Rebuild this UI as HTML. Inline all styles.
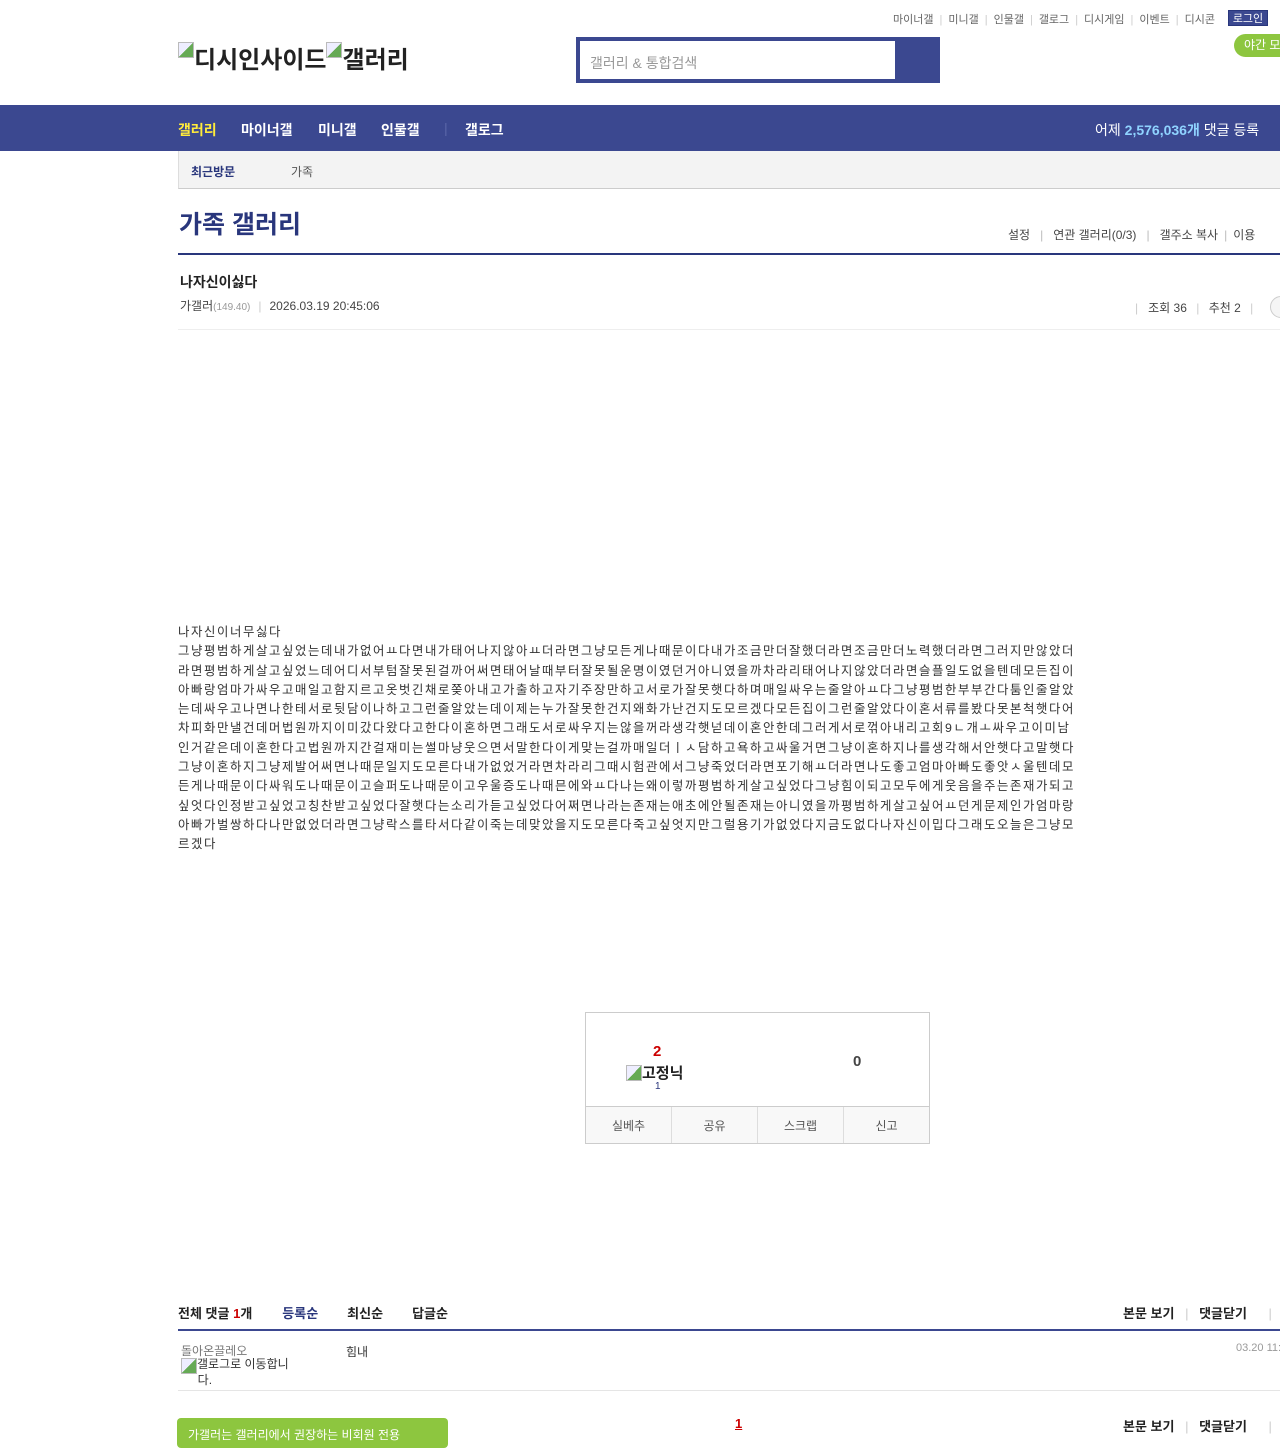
<!DOCTYPE html>
<html><head><meta charset="utf-8">
<style>
*{margin:0;padding:0;box-sizing:border-box}
body{width:1280px;height:1436px;overflow:hidden;background:#fff;font-family:"Liberation Sans","Noto Sans CJK KR",sans-serif;color:#333;position:relative}
.a{position:absolute;white-space:nowrap}
.ic{display:inline-block;width:16px;height:16px;border:1px solid #bbb;background:linear-gradient(135deg,#eef 50%,#6a5 50%);vertical-align:top;margin-top:2px}
.top{top:11px;left:893px;font-size:11px;color:#666}
.top i{color:#ccc;font-style:normal;margin:0 6px}
.login{top:10px;left:1228px;width:40px;height:16px;background:#3b4890;color:#fff;font-size:11px;text-align:center;line-height:16px;border:1px solid #29367c}
.night{top:34px;left:1234px;width:60px;height:23px;background:#8dc63f;border-radius:12px;color:#fff;font-size:12px;line-height:23px;padding-left:10px}
.logo{top:40px;left:178px;font-size:24px;font-weight:bold;color:#222}
.search{top:37px;left:576px;width:364px;height:46px;background:#3b4890}
.search div{position:absolute;left:4px;top:4px;width:315px;height:38px;background:#fff;font-size:14px;color:#999;padding:12px 10px}
.nav{top:105px;left:0;width:1280px;height:46px;background:#3b4890}
.nav span{position:absolute;top:15px;font-size:14px;font-weight:bold;color:#fff}
.sub{top:151px;left:178px;width:1110px;height:38px;background:#f3f3f3;border-bottom:1px solid #ccc;border-left:1px solid #ddd}
.title{top:205px;left:179px;font-size:25px;font-weight:bold;color:#29367c}
.menu{top:226px;left:1008px;font-size:12px;color:#444}
.menu i{color:#bbb;font-style:normal;margin:0 10px}
.line1{top:253px;left:178px;width:1102px;height:2px;background:#29367c}
.body{top:623px;left:178px;width:1100px;font-size:12.4px;letter-spacing:1.6px;line-height:19.3px;color:#333;white-space:nowrap}
.rec{top:1012px;left:585px;width:345px;height:132px;border:1px solid #ccc}
.btns{position:absolute;left:0;bottom:0;width:343px;height:37px;border-top:1px solid #ccc;background:#f8f8f8;display:flex}
.btns div{flex:1;border-right:1px solid #ddd;font-size:12px;color:#555;text-align:center;line-height:38px}
.btns div:last-child{border:none}
.cm{top:1303px;left:178px;font-size:13px;font-weight:bold;color:#222}
.line2{top:1329px;left:178px;width:1102px;height:2px;background:#3b4890}
</style></head><body>
<div class="a top">마이너갤<i>|</i>미니갤<i>|</i>인물갤<i>|</i>갤로그<i>|</i>디시게임<i>|</i>이벤트<i>|</i>디시콘</div>
<div class="a login">로그인</div>
<div class="a night">야간 모드</div>
<div class="a logo"><span class="ic"></span>디시인사이드<span class="ic"></span>갤러리</div>
<div class="a search"><div>갤러리 &amp; 통합검색</div></div>
<div class="a nav">
<span style="left:178px;color:#ffeb3b">갤러리</span><span style="left:241px">마이너갤</span><span style="left:318px">미니갤</span><span style="left:381px">인물갤</span><span style="left:444px;top:15px;color:#5a66a8;font-weight:normal">|</span><span style="left:465px">갤로그</span>
<span style="left:1095px;font-weight:normal">어제 <b style="color:#8fd3ff">2,576,036개</b> 댓글 등록</span>
</div>
<div class="a sub"><span class="a" style="left:12px;top:12px;font-size:12px;font-weight:bold;color:#29367c">최근방문</span><span class="a" style="left:112px;top:12px;font-size:12px;color:#555">가족</span></div>
<div class="a title">가족 갤러리</div>
<div class="a menu">설정<i>|</i>연관 갤러리(0/3)<i>|</i>갤주소 복사<i style="margin:0 6px">|</i>이용</div>
<div class="a line1"></div>
<div class="a" style="top:272px;left:180px;font-size:14px;font-weight:bold;color:#222">나자신이싫다</div>
<div class="a" style="top:297px;left:180px;font-size:12px;color:#444">가갤러<span style="font-size:10px;color:#999">(149.40)</span><span style="color:#ccc;margin:0 8px">|</span>2026.03.19 20:45:06</div>
<div class="a" style="top:299px;left:1135px;font-size:12px;color:#444"><span style="color:#ccc">|</span>&nbsp;&nbsp; 조회 36 <span style="color:#ccc;margin:0 6px">|</span> 추천 2 <span style="color:#ccc;margin:0 6px">|</span></div>
<div class="a" style="top:296px;left:1270px;width:22px;height:22px;border:1px solid #ccc;border-radius:11px;background:#f5f5f5"></div>
<div class="a" style="top:329px;left:178px;width:1102px;height:1px;background:#eee"></div>
<div class="a body">나자신이너무싫다<br>그냥평범하게살고싶었는데내가없어ㅛ다면내가태어나지않아ㅛ더라면그냥모든게나때문이다내가조금만더잘했더라면조금만더노력했더라면그러지만않았더<br>라면평범하게살고싶었느데어디서부텀잘못된걸까어써면태어날때부터잘못될운명이였던거아니였을까차라리태어나지않았더라면슬플일도없을텐데모든집이<br>아빠랑엄마가싸우고매일고함지르고옷벗긴채로쫒아내고가출하고자기주장만하고서로가잘못햇다하며매일싸우는줄알아ㅛ다그냥평범한부부간다툼인줄알았<br>는데싸우고나면나한테서로뒷담이나하고그런줄알았는데이제는누가잘못한건지왜화가난건지도모르겠다모든집이그런줄알았다이혼서류를봤다못본척햇다어<br>차피화만낼건데머법원까지이미갔다왔다고한다이혼하면그래도서로싸우지는않을꺼라생각햇넏데이혼안한데그러게서로꺾아내리고회9ㄴ개ㅗ싸우고이미남<br>인거같은데이혼한다고법원까지간걸재미는썰마냥웃으면서말한다이게맞는걸까매일더ㅣㅅ담하고욕하고싸울거면그냥이혼하지나를생각해서안햇다고말햇다<br>그냥이혼하지그냥제발어써면나때문일지도모른다내가없었거라면차라리그때시험관에서그냥죽었더라면포기해ㅛ더라면나도좋고엄마아빠도좋앗ㅅ울텐데모<br>든게나때문이다싸워도나때문이고슬퍼도나때문이고우울증도나때믄에와ㅛ다나는왜이렇까평범하게살고싶었다그냥힘이되고모두에게웃음을주는존재가되고<br>싶엇다인정받고싶었고칭찬받고싶었다잘햇다는소리가듣고싶었다어쩌면나라는존재는애초에안될존재는아니였을까평범하게살고싶어ㅛ던게문제인가엄마랑<br>아빠가벌쌍하다나만없었더라면그냥락스를타서다같이죽는데맞았을지도모른다죽고싶엇지만그럴용기가없었다지금도없다나자신이밉다그래도오늘은그냥모<br>르겠다</div>
<div class="a rec">
<div class="a" style="left:67px;top:30px;font-size:15px;font-weight:bold;color:#c00">2</div>
<div class="a" style="left:40px;top:49px;font-size:15px;font-weight:bold;color:#222"><span class="ic" style="margin-top:3px"></span>고정닉</div>
<div class="a" style="left:69px;top:68px;font-size:10px;color:#29367c">1</div>
<div class="a" style="left:267px;top:40px;font-size:15px;font-weight:bold;color:#444">0</div>
<div class="btns"><div>실베추</div><div>공유</div><div>스크랩</div><div>신고</div></div>
</div>
<div class="a cm">전체 댓글 <span style="color:#c00">1</span>개<span style="margin-left:30px;color:#29367c">등록순</span><span style="margin-left:29px">최신순</span><span style="margin-left:29px">답글순</span></div>
<div class="a" style="top:1303px;left:1123px;font-size:13px;font-weight:bold;color:#222">본문 보기 <span style="color:#ccc;font-weight:normal;margin:0 7px">|</span> 댓글닫기 <span style="color:#ccc;font-weight:normal;margin-left:18px">|</span></div>
<div class="a line2"></div>
<div class="a" style="top:1342px;left:181px;font-size:12px;color:#777">돌아온끌레오</div>
<div class="a" style="top:1358px;left:181px;font-size:12px;color:#333;line-height:13px"><span class="ic" style="margin-top:0"></span>갤로그로 이동합니<br>&nbsp;&nbsp;&nbsp;&nbsp;&nbsp;다.</div>
<div class="a" style="top:1343px;left:346px;font-size:12px;color:#333">힘내</div>
<div class="a" style="top:1342px;left:1236px;font-size:11px;color:#999">03.20 11:</div>
<div class="a" style="top:1390px;left:178px;width:1102px;height:1px;background:#e5e5e5"></div>
<div class="a" style="top:1418px;left:177px;width:271px;height:30px;background:#8dc63f;border-radius:4px;color:#fff;font-size:12px;padding:8px 11px">가갤러는 갤러리에서 권장하는 비회원 전용</div>
<div class="a" style="top:1416px;left:735px;font-size:13px;font-weight:bold;color:#c00;text-decoration:underline">1</div>
<div class="a" style="top:1416px;left:1123px;font-size:13px;font-weight:bold;color:#222">본문 보기 <span style="color:#ccc;font-weight:normal;margin:0 7px">|</span> 댓글닫기 <span style="color:#ccc;font-weight:normal;margin-left:18px">|</span></div>
</body></html>
